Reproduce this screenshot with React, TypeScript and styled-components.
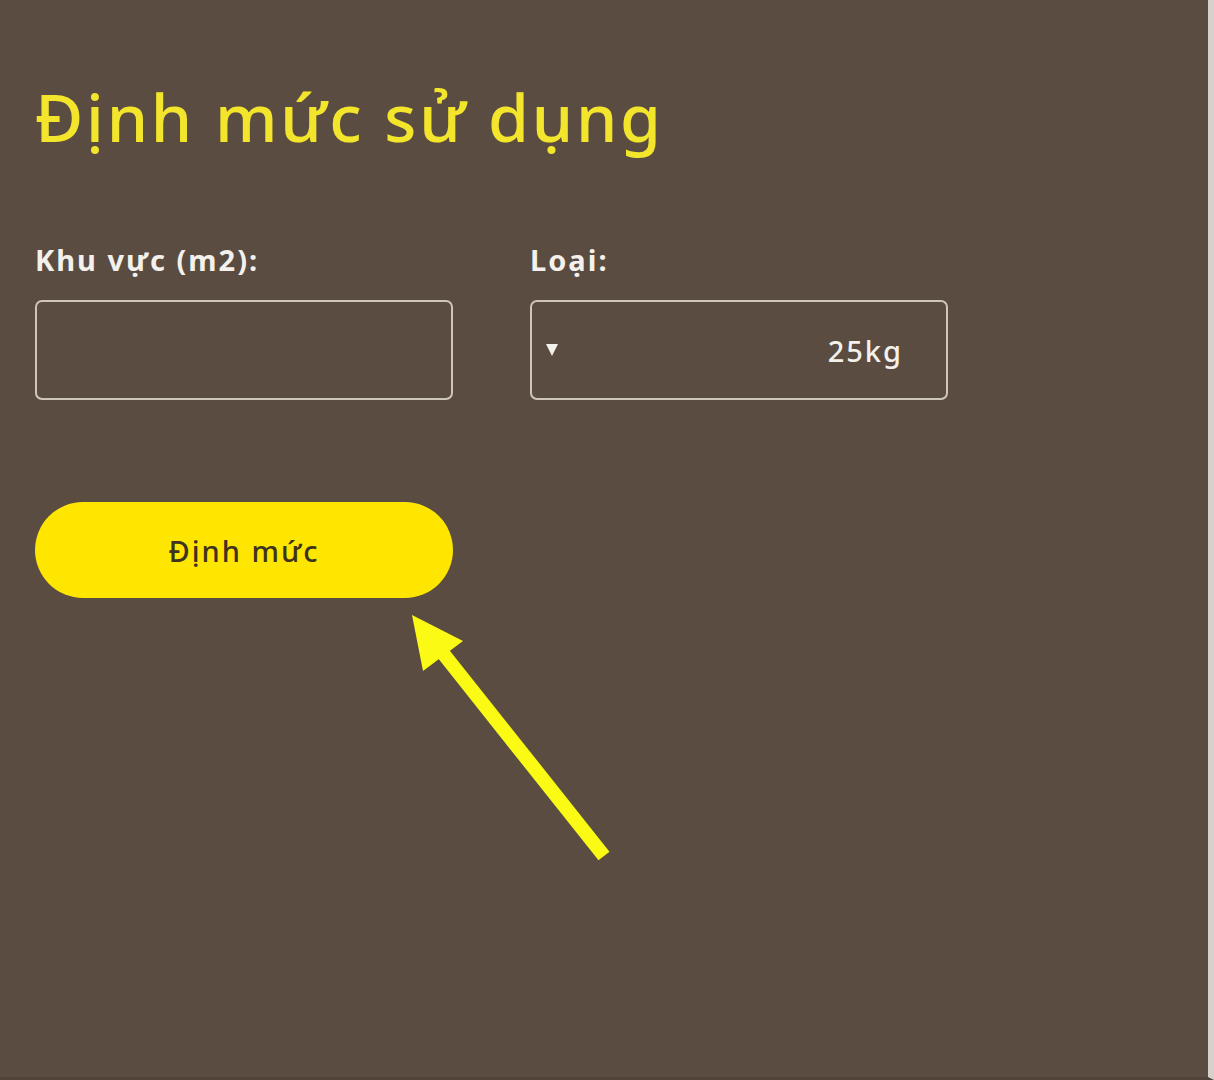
import React, { FC } from "react";
import styled, { createGlobalStyle } from "styled-components";

const GlobalStyle = createGlobalStyle`
  html, body {
    margin: 0;
    padding: 0;
    background: #5a4c41;
  }
  * {
    box-sizing: border-box;
  }
`;

const Page = styled.div`
  position: relative;
  width: 1214px;
  height: 1080px;
  padding: 74px 0 0 35px;
  background: #5a4c41;
  border-right: 6px solid #d6d1cb;
  border-bottom: 3px solid #4f433a;
  font-family: "Noto Sans", "Lato", sans-serif;
  overflow: hidden;
`;

const Title = styled.h1`
  margin: 0;
  color: #f3e52c;
  font-size: 66px;
  font-weight: 500;
  line-height: 84px;
  letter-spacing: 2.8px;
`;

const Fields = styled.div`
  display: grid;
  grid-template-columns: 418px 418px;
  column-gap: 77px;
  margin-top: 82px;
`;

const Field = styled.div`
  display: flex;
  flex-direction: column;
`;

const Label = styled.label`
  color: #f4f1ec;
  font-size: 29px;
  font-weight: 700;
  line-height: 40px;
  letter-spacing: 2px;
  margin-bottom: 20px;
`;

const Box = styled.div`
  display: flex;
  align-items: center;
  justify-content: space-between;
  height: 100px;
  padding: 0 43px 0 14px;
  border: 2px solid #cfc6bb;
  border-radius: 7px;
`;

const Caret = styled.span`
  width: 0;
  height: 0;
  border-left: 6px solid transparent;
  border-right: 6px solid transparent;
  border-top: 12px solid #f4f1ec;
`;

const Value = styled.span`
  color: #f4f1ec;
  font-size: 29px;
  font-weight: 500;
  letter-spacing: 2px;
`;

const Button = styled.button`
  display: flex;
  align-items: center;
  justify-content: center;
  width: 418px;
  height: 96px;
  margin-top: 102px;
  border: none;
  border-radius: 48px;
  background: #ffe600;
  color: #3d3320;
  font-family: "Noto Sans", "Lato", sans-serif;
  font-size: 29px;
  font-weight: 500;
  letter-spacing: 2px;
  cursor: pointer;
`;

const Arrow = styled.svg`
  position: absolute;
  left: 0;
  top: 0;
  pointer-events: none;
`;

export const App: FC = () => {
  return (
    <>
      <GlobalStyle />
      <Page>
        <Title>Định mức sử dụng</Title>
        <Fields>
          <Field>
            <Label>Khu vực (m2):</Label>
            <Box />
          </Field>
          <Field>
            <Label>Loại:</Label>
            <Box>
              <Caret />
              <Value>25kg</Value>
            </Box>
          </Field>
        </Fields>
        <Button>Định mức</Button>
        <Arrow width="1214" height="1080" viewBox="0 0 1214 1080">
          <line x1="604" y1="856" x2="438" y2="647" stroke="#fafa14" strokeWidth="14" />
          <polygon points="412,615 463,641 423,671" fill="#fafa14" />
        </Arrow>
      </Page>
    </>
  );
};

export default App;
